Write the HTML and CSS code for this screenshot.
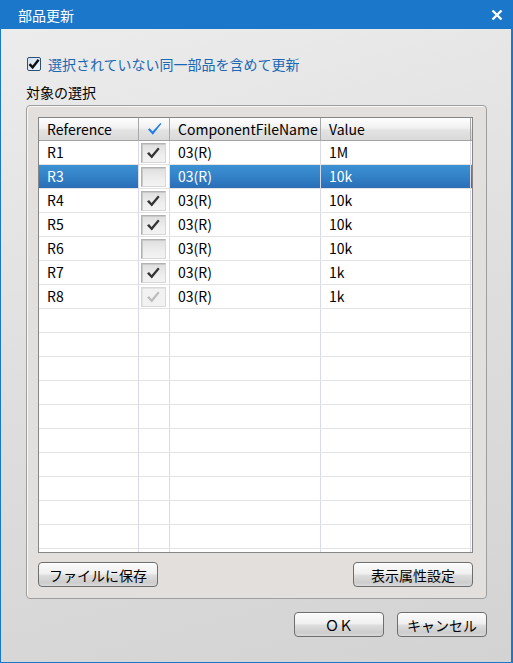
FILE: index.html
```html
<!DOCTYPE html>
<html lang="ja">
<head>
<meta charset="utf-8">
<title>部品更新</title>
<link rel="stylesheet" href="styles.css">
</head>
<body>
<div class="window">
  <div class="titlebar">
    <span class="title">部品更新</span>
    <svg class="close" width="12" height="12" viewBox="0 0 12 12"><path d="M1.5 1.5 L10.5 10.5 M10.5 1.5 L1.5 10.5" stroke="#fff" stroke-width="2.4" fill="none"/></svg>
  </div>
  <div class="content">
    <label class="check-row">
      <svg class="cb" width="14" height="14" viewBox="0 0 14 14">
        <defs><linearGradient id="cbg" x1="0" y1="0" x2="1" y2="1"><stop offset="0" stop-color="#cfe0f3"/><stop offset="1" stop-color="#f2f7fc"/></linearGradient></defs>
        <rect x="0.5" y="0.5" width="13" height="13" rx="1.5" fill="url(#cbg)" stroke="#2d4f73"/>
        <path d="M2.5 7.2 L5.6 10.4 L11.6 2.8" stroke="#111" stroke-width="2.5" fill="none"/>
      </svg>
      <span class="check-text">選択されていない同一部品を含めて更新</span>
    </label>
    <div class="group-label">対象の選択</div>
    <div class="group">
      <div class="grid">
        <div class="head">
          <div class="hcell">Reference</div>
          <div class="hcell hcheck"><svg width="15" height="14" viewBox="0 0 15 14"><path d="M1 7.5 L2.6 6.3 L5.6 9.6 L13.4 1 L14.4 1.8 L5.8 12.8 Z" fill="#1f7be6"/></svg></div>
          <div class="hcell">ComponentFileName</div>
          <div class="hcell">Value</div>
          <div class="hcell filler"></div>
        </div>
        <div class="body">
          <div class="row"><div class="cell">R1</div><div class="cell ccell"><span class="box"><svg width="23" height="18" viewBox="0 0 23 18"><path d="M5 9.5 L7 8 L9.6 11 L16 3.6 L17.6 5 L9.8 14.4 Z" fill="#333"/></svg></span></div><div class="cell">03(R)</div><div class="cell">1M</div><div class="cell filler"></div></div>
          <div class="row sel"><div class="cell">R3</div><div class="cell ccell"><span class="box"></span></div><div class="cell">03(R)</div><div class="cell">10k</div><div class="cell filler"></div></div>
          <div class="row"><div class="cell">R4</div><div class="cell ccell"><span class="box"><svg width="23" height="18" viewBox="0 0 23 18"><path d="M5 9.5 L7 8 L9.6 11 L16 3.6 L17.6 5 L9.8 14.4 Z" fill="#333"/></svg></span></div><div class="cell">03(R)</div><div class="cell">10k</div><div class="cell filler"></div></div>
          <div class="row"><div class="cell">R5</div><div class="cell ccell"><span class="box"><svg width="23" height="18" viewBox="0 0 23 18"><path d="M5 9.5 L7 8 L9.6 11 L16 3.6 L17.6 5 L9.8 14.4 Z" fill="#333"/></svg></span></div><div class="cell">03(R)</div><div class="cell">10k</div><div class="cell filler"></div></div>
          <div class="row"><div class="cell">R6</div><div class="cell ccell"><span class="box"></span></div><div class="cell">03(R)</div><div class="cell">10k</div><div class="cell filler"></div></div>
          <div class="row"><div class="cell">R7</div><div class="cell ccell"><span class="box"><svg width="23" height="18" viewBox="0 0 23 18"><path d="M5 9.5 L7 8 L9.6 11 L16 3.6 L17.6 5 L9.8 14.4 Z" fill="#333"/></svg></span></div><div class="cell">03(R)</div><div class="cell">1k</div><div class="cell filler"></div></div>
          <div class="row"><div class="cell">R8</div><div class="cell ccell"><span class="box dis"><svg width="23" height="18" viewBox="0 0 23 18"><path d="M5 9.5 L7 8 L9.6 11 L16 3.6 L17.6 5 L9.8 14.4 Z" fill="#bdbdbd"/></svg></span></div><div class="cell">03(R)</div><div class="cell">1k</div><div class="cell filler"></div></div>
          <div class="row"><div class="cell"></div><div class="cell"></div><div class="cell"></div><div class="cell"></div><div class="cell filler"></div></div>
          <div class="row"><div class="cell"></div><div class="cell"></div><div class="cell"></div><div class="cell"></div><div class="cell filler"></div></div>
          <div class="row"><div class="cell"></div><div class="cell"></div><div class="cell"></div><div class="cell"></div><div class="cell filler"></div></div>
          <div class="row"><div class="cell"></div><div class="cell"></div><div class="cell"></div><div class="cell"></div><div class="cell filler"></div></div>
          <div class="row"><div class="cell"></div><div class="cell"></div><div class="cell"></div><div class="cell"></div><div class="cell filler"></div></div>
          <div class="row"><div class="cell"></div><div class="cell"></div><div class="cell"></div><div class="cell"></div><div class="cell filler"></div></div>
          <div class="row"><div class="cell"></div><div class="cell"></div><div class="cell"></div><div class="cell"></div><div class="cell filler"></div></div>
          <div class="row"><div class="cell"></div><div class="cell"></div><div class="cell"></div><div class="cell"></div><div class="cell filler"></div></div>
          <div class="row"><div class="cell"></div><div class="cell"></div><div class="cell"></div><div class="cell"></div><div class="cell filler"></div></div>
          <div class="row"><div class="cell"></div><div class="cell"></div><div class="cell"></div><div class="cell"></div><div class="cell filler"></div></div>
          <div class="row"><div class="cell"></div><div class="cell"></div><div class="cell"></div><div class="cell"></div><div class="cell filler"></div></div>
        </div>
      </div>
      <div class="group-buttons">
        <button class="btn wide">ファイルに保存</button>
        <button class="btn wide">表示属性設定</button>
      </div>
    </div>
    <div class="dialog-buttons">
      <button class="btn">ＯＫ</button>
      <button class="btn">キャンセル</button>
    </div>
  </div>
</div>
</body>
</html>
```

FILE: styles.css
```css
* { box-sizing: border-box; }
html, body { margin: 0; padding: 0; }
body {
  font-family: "Noto Sans CJK JP", "Noto Sans", sans-serif;
  font-size: 14px;
  color: #000;
}
.window {
  width: 513px;
  height: 663px;
  background: #1a77c9;
  padding: 0 2px 1px 1px;
  display: flex;
  flex-direction: column;
}
.titlebar {
  height: 29px;
  flex: none;
  display: flex;
  align-items: center;
  justify-content: space-between;
  padding: 0 8px 0 17px;
  color: #fff;
}
.title { font-size: 14px; line-height: 20px; }
.close { display: block; }
.content {
  flex: 1;
  background: linear-gradient(165deg, #ececec 0%, #dedede 50%, #d3d3d3 100%);
  padding: 25px 24px 0 25px;
  display: flex;
  flex-direction: column;
}
.check-row {
  display: flex;
  align-items: center;
  height: 20px;
  gap: 7px;
}
.cb { display: block; margin-left: 1px; flex: none; }
.check-text { color: #1a67b3; line-height: 20px; }
.group-label { margin-top: 8px; height: 20px; line-height: 20px; }
.group {
  margin-top: 3px;
  width: 461px;
  height: 494px;
  border: 1px solid #9e9e9e;
  border-radius: 4px;
  background: #e3dfdd;
  box-shadow: inset 1px 1px 0 #f7f7f7;
  padding: 11px 13px 11px 11px;
  display: flex;
  flex-direction: column;
}
.grid {
  width: 435px;
  height: 436px;
  border: 1px solid #868686;
  background: #fff;
  display: flex;
  flex-direction: column;
}
.head, .row {
  display: grid;
  grid-template-columns: 100px 31px 151px 150px 1px;
}
.head {
  height: 23px;
  border-bottom: 1px solid #a3a3a3;
  flex: none;
}
.hcell {
  border-right: 1px solid #a8a8a8;
  padding-left: 8px;
  line-height: 22px;
  white-space: nowrap;
  overflow: hidden;
  background: linear-gradient(#fefefe 0%, #f1f1f1 45%, #e3e3e3 55%, #d9d9d9 100%);
}
.hcheck { display: flex; align-items: center; justify-content: center; padding-left: 0; }
.hcheck svg { display: block; }
.hcell.filler, .cell.filler { border-right: none; padding: 0; }
.body { flex: 1; overflow: hidden; }
.row {
  height: 24px;
  border-bottom: 1px solid #e3e3e3;
}
.cell {
  border-right: 1px solid #d9d9ee;
  padding-left: 8px;
  line-height: 23px;
  white-space: nowrap;
}
.row.sel .cell {
  background: linear-gradient(#3c92d3 0%, #3381c7 50%, #2a6eb6 100%);
  color: #fff;
}
.row.sel .cell.ccell { background: #fff; }
.ccell { padding: 2px 0 0 2px; }
.box {
  display: block;
  width: 25px;
  height: 20px;
  border: 1px solid #b2b2b2;
  border-right-color: #d6d6d6;
  border-bottom-color: #d6d6d6;
  box-shadow: inset 1px 1px 0 #c9c9c9;
  background: linear-gradient(#dedede, #eeeeee 60%, #f3f3f3);
}
.box svg { display: block; }
.box.dis { background: #f2f2f2; border-color: #d8d8d8; box-shadow: inset 1px 1px 0 #e4e4e4; }
.group-buttons {
  margin-top: 9px;
  display: flex;
  justify-content: space-between;
}
.btn {
  font-family: "Noto Sans CJK JP", "Noto Sans", sans-serif;
  font-size: 14px;
  color: #000;
  width: 90px;
  height: 25px;
  padding: 0;
  line-height: 22px;
  border: 1px solid #6e6e6e;
  border-radius: 4px;
  background: linear-gradient(#fbfbfb 0%, #f0f0f0 45%, #dcdcdc 55%, #cdcdcd 85%, #d9d9d9 100%);
  box-shadow: inset 0 1px 0 #fff;
}
.btn.wide { width: 120px; }
.dialog-buttons {
  margin-top: 13px;
  display: flex;
  justify-content: flex-end;
  gap: 13px;
}
```
